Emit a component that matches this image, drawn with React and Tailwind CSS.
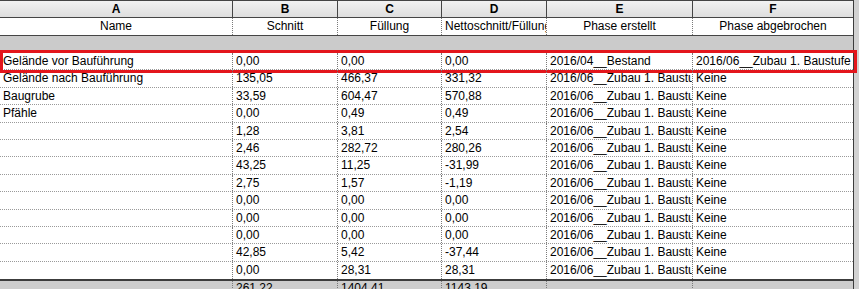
const cols = ["A", "B", "C", "D", "E", "F"];
const names = ["Name", "Schnitt", "Füllung", "Nettoschnitt/Füllung", "Phase erstellt", "Phase abgebrochen"];
const widths = ["w-[233px]", "w-[105px]", "w-[104px]", "w-[105px]", "w-[146px]", "w-[160px]"];

const ZUBAU = "2016/06__Zubau 1. Baustufe";

const rows = [
  ["Gelände vor Bauführung", "0,00", "0,00", "0,00", "2016/04__Bestand", ZUBAU],
  ["Gelände nach Bauführung", "135,05", "466,37", "331,32", ZUBAU, "Keine"],
  ["Baugrube", "33,59", "604,47", "570,88", ZUBAU, "Keine"],
  ["Pfähle", "0,00", "0,49", "0,49", ZUBAU, "Keine"],
  ["", "1,28", "3,81", "2,54", ZUBAU, "Keine"],
  ["", "2,46", "282,72", "280,26", ZUBAU, "Keine"],
  ["", "43,25", "11,25", "-31,99", ZUBAU, "Keine"],
  ["", "2,75", "1,57", "-1,19", ZUBAU, "Keine"],
  ["", "0,00", "0,00", "0,00", ZUBAU, "Keine"],
  ["", "0,00", "0,00", "0,00", ZUBAU, "Keine"],
  ["", "0,00", "0,00", "0,00", ZUBAU, "Keine"],
  ["", "42,85", "5,42", "-37,44", ZUBAU, "Keine"],
  ["", "0,00", "28,31", "28,31", ZUBAU, "Keine"],
];

const totals = ["", "261,22", "1404,41", "1143,19", "", ""];

function Cell({ i, children, className = "" }) {
  return (
    <div
      className={`${widths[i]} shrink-0 h-full overflow-hidden whitespace-nowrap px-[3px] ${
        i < 5 ? "border-r border-dotted border-[#7a7a7a]" : ""
      } ${className}`}
    >
      {children}
    </div>
  );
}

export default function App() {
  return (
    <div className="w-[859px] h-[289px] overflow-hidden bg-[#d2d2d2] text-[12px] text-black font-['Liberation_Sans',Arial,sans-serif]">
      <div className="w-[854px] border-r border-[#3c3c3c] bg-white">
        {/* Column letters */}
        <div className="flex h-[18px] bg-gradient-to-b from-[#f2f2f2] to-[#dedede] border-t border-b border-[#454545]">
          {cols.map((c, i) => (
            <div
              key={c}
              className={`${widths[i]} shrink-0 text-center font-bold leading-[16px] ${
                i < 5 ? "border-r border-[#454545]" : ""
              }`}
            >
              {c}
            </div>
          ))}
        </div>

        {/* Field names */}
        <div className="flex h-[18px] border-b border-[#454545] leading-[17px]">
          {names.map((n, i) => (
            <Cell key={n} i={i} className="text-center">
              {n}
            </Cell>
          ))}
        </div>

        {/* Grouping band */}
        <div className="h-[17px] bg-[#cbcbcb]" />

        {/* Data */}
        {rows.map((r, ri) => (
          <div
            key={ri}
            className={`relative flex h-[17.4px] leading-[16px] ${
              ri < rows.length - 1 ? "border-b border-dotted border-[#9a9a9a]" : ""
            }`}
          >
            {r.map((v, i) => (
              <Cell key={i} i={i}>
                {v}
              </Cell>
            ))}
            {ri === 0 && (
              <div className="absolute left-0 -top-[3px] w-[857px] h-[23px] border-[3px] border-[#e3161c] pointer-events-none" />
            )}
          </div>
        ))}

        {/* Totals */}
        <div className="flex h-[17px] border-t-2 border-[#3c3c3c] bg-[#cdcdcd] leading-[15px]">
          {totals.map((v, i) => (
            <Cell key={i} i={i}>
              {v}
            </Cell>
          ))}
        </div>
      </div>
    </div>
  );
}
